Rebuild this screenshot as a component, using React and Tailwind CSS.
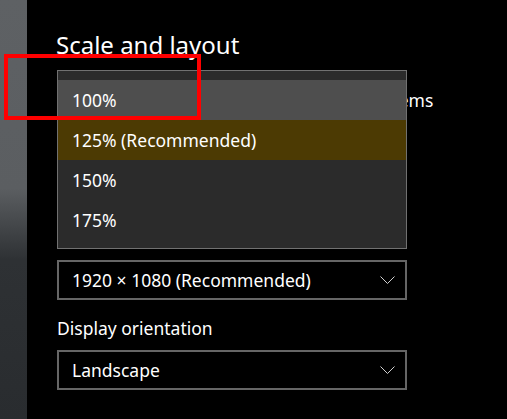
import React from "react";

const font = { fontFamily: '"Noto Sans", "Open Sans", sans-serif' };

const Chevron = () => (
  <svg width="15" height="9" viewBox="0 0 15 9" fill="none">
    <polyline points="0.5,0.5 7.5,7.5 14.5,0.5" stroke="#d0d0d0" strokeWidth="1" />
  </svg>
);

const Select = ({ value }) => (
  <div className="w-[350px] h-[40px] border-2 border-[#666666] flex items-center justify-between pl-[13px] pr-[10px] text-[17.5px] text-white">
    <span>{value}</span>
    <Chevron />
  </div>
);

const options = ["100%", "125% (Recommended)", "150%", "175%"];

export default function App() {
  return (
    <div
      className="relative w-[507px] h-[419px] bg-black flex overflow-hidden"
      style={font}
    >
      <div className="w-[27px] h-full bg-[linear-gradient(to_bottom,#5e6164_0%,#5b5e61_45%,#2e3134_62%,#292c2f_100%)]" />

      <div className="flex-1 pl-[30px] pt-[29px] text-white">
        <h1 className="text-[24px] leading-[32px] -ml-px">Scale and layout</h1>
        <p className="mt-[29px] text-[17.5px] leading-[20px] whitespace-nowrap">
          Change the size of text, apps, and other items
        </p>
        {/* space taken by the scale box, link and resolution label under the open list */}
        <div className="h-[150px]" />
        <Select value="1920 × 1080 (Recommended)" />
        <p className="mt-[18px] text-[17.5px] leading-[20px]">Display orientation</p>
        <div className="mt-[12px]">
          <Select value="Landscape" />
        </div>
      </div>

      {/* open dropdown */}
      <div className="absolute left-[57px] top-[70px] w-[350px] h-[179px] border border-[#717171] bg-[#2b2b2b] pt-[9px] pb-[8px]">
        {options.map((o, i) => (
          <div
            key={o}
            className={
              "h-[40px] flex items-center pl-[14px] text-[17.5px] text-white " +
              (i === 0 ? "bg-[#4e4e4e]" : i === 1 ? "bg-[#4c3a03]" : "")
            }
          >
            {o}
          </div>
        ))}
      </div>

      {/* annotation */}
      <div className="absolute left-[4px] top-[54px] w-[197px] h-[66px] border-4 border-[#ff0000]" />
    </div>
  );
}
